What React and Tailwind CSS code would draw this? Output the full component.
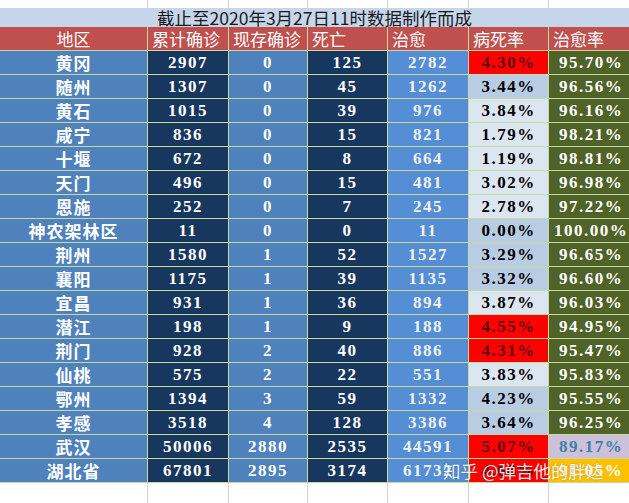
import React from 'react';

const rows = [
  ['黄冈', '2907', '0', '125', '2782', '4.30%', '95.70%', 'red'],
  ['随州', '1307', '0', '45', '1262', '3.44%', '96.56%', 'mid'],
  ['黄石', '1015', '0', '39', '976', '3.84%', '96.16%', 'light'],
  ['咸宁', '836', '0', '15', '821', '1.79%', '98.21%', 'light'],
  ['十堰', '672', '0', '8', '664', '1.19%', '98.81%', 'light'],
  ['天门', '496', '0', '15', '481', '3.02%', '96.98%', 'light'],
  ['恩施', '252', '0', '7', '245', '2.78%', '97.22%', 'light'],
  ['神农架林区', '11', '0', '0', '11', '0.00%', '100.00%', 'mid'],
  ['荆州', '1580', '1', '52', '1527', '3.29%', '96.65%', 'mid'],
  ['襄阳', '1175', '1', '39', '1135', '3.32%', '96.60%', 'mid'],
  ['宜昌', '931', '1', '36', '894', '3.87%', '96.03%', 'light'],
  ['潜江', '198', '1', '9', '188', '4.55%', '94.95%', 'red'],
  ['荆门', '928', '2', '40', '886', '4.31%', '95.47%', 'red'],
  ['仙桃', '575', '2', '22', '551', '3.83%', '95.83%', 'light'],
  ['鄂州', '1394', '3', '59', '1332', '4.23%', '95.55%', 'mid'],
  ['孝感', '3518', '4', '128', '3386', '3.64%', '96.25%', 'mid'],
  ['武汉', '50006', '2880', '2535', '44591', '5.07%', '89.17%', 'red'],
  ['湖北省', '67801', '2895', '3174', '61732', '4.68%', '91.05%', 'red'],
];

const rateBg = {
  red: 'bg-[#ff0000] text-[#5e0000]',
  mid: 'bg-[#b8cce4] text-black',
  light: 'bg-[#dce6f1] text-black',
};

const headers = ['累计确诊', '现存确诊', '死亡', '治愈', '病死率', '治愈率'];

const cell = 'h-[23px] flex items-center justify-center';
const num = "font-['Liberation_Serif','Noto_Sans_CJK_SC',serif] font-bold text-[17px] tracking-[1.5px] leading-none";

function cureBg(name) {
  if (name === '武汉') return 'bg-[#ccc0da] text-[#3f7fa6]';
  if (name === '湖北省') return 'bg-[#ffc000] text-white';
  return 'bg-[#4f6228] text-white';
}

export default function App() {
  return (
    <div className="relative w-[629px] h-[503px] bg-white overflow-hidden">
      {/* top blank row */}
      <div className="grid grid-cols-[147px_80px_78px_79px_80px_79px_80px] gap-x-px bg-[#d4d4d4] h-[8px]">
        {Array.from({ length: 7 }).map((_, i) => (
          <div key={i} className="bg-white" />
        ))}
      </div>

      <div className="h-[19px] bg-[#c5d5ea] flex items-center justify-center font-['Noto_Sans_CJK_SC','Liberation_Sans',sans-serif] text-[17.5px] text-[#1a1a1a] leading-none">
        截止至2020年3月27日11时数据制作而成
      </div>

      <div className="grid grid-cols-[147px_80px_78px_79px_80px_79px_80px] gap-px bg-[#c6d99f] pb-px">
        <div className="h-[23px] bg-[#c0504d] flex items-center justify-center text-white text-[17px] font-['Noto_Sans_CJK_SC',sans-serif] leading-none">
          地区
        </div>
        {headers.map((h) => (
          <div
            key={h}
            className="h-[23px] bg-[#c0504d] flex items-center pl-1 text-white text-[17px] font-['Noto_Sans_CJK_SC',sans-serif] leading-none whitespace-nowrap"
          >
            {h}
          </div>
        ))}

        {rows.map(([name, total, current, dead, cured, rate, cure, tone]) => (
          <React.Fragment key={name}>
            <div className={`${cell} bg-[#4f81bd] text-white font-['Noto_Sans_CJK_SC',sans-serif] font-bold text-[17px] tracking-[1px] leading-none`}>
              {name}
            </div>
            <div className={`${cell} ${num} bg-[#17375e] text-white`}>{total}</div>
            <div className={`${cell} ${num} bg-[#4f81bd] text-white`}>{current}</div>
            <div className={`${cell} ${num} bg-[#17375e] text-white`}>{dead}</div>
            <div className={`${cell} ${num} bg-[#558ed5] text-[#eef3fa]`}>{cured}</div>
            <div className={`${cell} ${num} ${rateBg[tone]}`}>{rate}</div>
            <div className={`${cell} ${num} ${cureBg(name)} pl-1`}>{cure}</div>
          </React.Fragment>
        ))}
      </div>

      {/* empty sheet area below */}
      <div className="grid grid-cols-[147px_80px_78px_79px_80px_79px_80px] gap-x-px bg-[#d4d4d4] h-[30px]">
        {Array.from({ length: 7 }).map((_, i) => (
          <div key={i} className="bg-white" />
        ))}
      </div>

      {/* watermark */}
      <div className="absolute left-[443px] top-[462px] text-[17.5px] leading-none text-white/90 font-['Noto_Sans_CJK_SC',sans-serif] whitespace-nowrap [text-shadow:0_0_2px_rgba(0,0,0,0.35)]">
        知乎 @弹吉他的胖达
      </div>
    </div>
  );
}
